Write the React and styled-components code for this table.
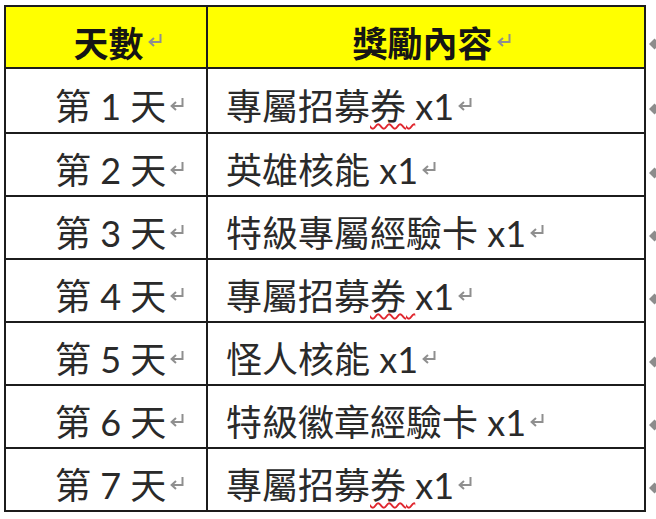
import React from "react";
import styled, { createGlobalStyle } from "styled-components";

const GlobalStyle = createGlobalStyle`
  html, body {
    margin: 0;
    padding: 0;
    background: #ffffff;
    overflow: hidden;
  }
`;

const Sheet = styled.div`
  padding: 5px 0 0 4px;
  font-family: Lato, "Noto Sans CJK TC", sans-serif;
  color: #262626;
`;

const Table = styled.div`
  display: flex;
  flex-direction: column;
`;

const Row = styled.div`
  display: grid;
  grid-template-columns: 204px 438px 14px;
  height: ${props => props.$height}px;
`;

const Cell = styled.div`
  box-sizing: border-box;
  display: flex;
  align-items: center;
  justify-content: ${props => (props.$center ? "center" : "flex-start")};
  padding: 12px 0 0 ${props => props.$pad}px;
  background: ${props => (props.$head ? "#ffff00" : "#ffffff")};
  border-right: 2px solid #1c1c1c;
  border-bottom: 2px solid #1c1c1c;
  border-left: ${props => (props.$first ? "2px solid #1c1c1c" : "none")};
  border-top: ${props => (props.$head ? "2px solid #1c1c1c" : "none")};
  font-size: ${props => (props.$head ? 35 : 36)}px;
  font-weight: ${props => (props.$head ? 700 : 400)};
  color: ${props => (props.$head ? "#151515" : "#2a2a2a")};
  line-height: 1.2;
  white-space: nowrap;
`;

const RowEnd = styled.div`
  display: flex;
  align-items: center;
  padding: 14px 0 0 3px;
`;

const Squiggle = styled.span`
  text-decoration: underline wavy #e0262e;
  text-decoration-thickness: 1.5px;
  text-underline-offset: 3px;
  text-decoration-skip-ink: none;
`;

const MarkSvg = styled.svg`
  display: inline-block;
  flex-shrink: 0;
  margin-left: 2px;
  margin-bottom: 6px;
  align-self: center;
`;

const Mark = () => (
  <MarkSvg width="18" height="14" viewBox="0 0 18 14">
    <path
      d="M14.5 1 V9 H4 M8 5 L3.6 9 L8 13"
      fill="none"
      stroke="#8f8f8f"
      strokeWidth="2"
    />
  </MarkSvg>
);

const Diamond = () => (
  <svg width="12" height="12" viewBox="0 0 12 12">
    <polygon points="0,6 6,0 12,6 6,12" fill="#8c8c8c" />
  </svg>
);

const Label = styled.span`
  display: inline-flex;
  align-items: center;
`;

const rewards = [
  { day: 1, name: "專屬招募券", flagged: true },
  { day: 2, name: "英雄核能" },
  { day: 3, name: "特級專屬經驗卡" },
  { day: 4, name: "專屬招募券", flagged: true },
  { day: 5, name: "怪人核能" },
  { day: 6, name: "特級徽章經驗卡" },
  { day: 7, name: "專屬招募券", flagged: true }
];

const RewardName = ({ name, flagged }) =>
  flagged ? (
    <span>
      {name.slice(0, -1)}
      <Squiggle>{name.slice(-1)} </Squiggle>x1
    </span>
  ) : (
    <span>{name} x1</span>
  );

export default function App() {
  return (
    <>
      <GlobalStyle />
      <Sheet>
        <Table>
          <Row $height={64}>
            <Cell $head $first $center $pad={25}>
              <Label>
                天數
                <Mark />
              </Label>
            </Cell>
            <Cell $head $center $pad={13}>
              <Label>
                獎勵內容
                <Mark />
              </Label>
            </Cell>
            <RowEnd>
              <Diamond />
            </RowEnd>
          </Row>
          {rewards.map((r, i) => (
            <Row key={r.day} $height={i === 0 ? 65 : 63}>
              <Cell $first $pad={49}>
                <Label>
                  第 {r.day} 天
                  <Mark />
                </Label>
              </Cell>
              <Cell $pad={18}>
                <Label>
                  <RewardName name={r.name} flagged={r.flagged} />
                  <Mark />
                </Label>
              </Cell>
              <RowEnd>
                <Diamond />
              </RowEnd>
            </Row>
          ))}
        </Table>
      </Sheet>
    </>
  );
}
